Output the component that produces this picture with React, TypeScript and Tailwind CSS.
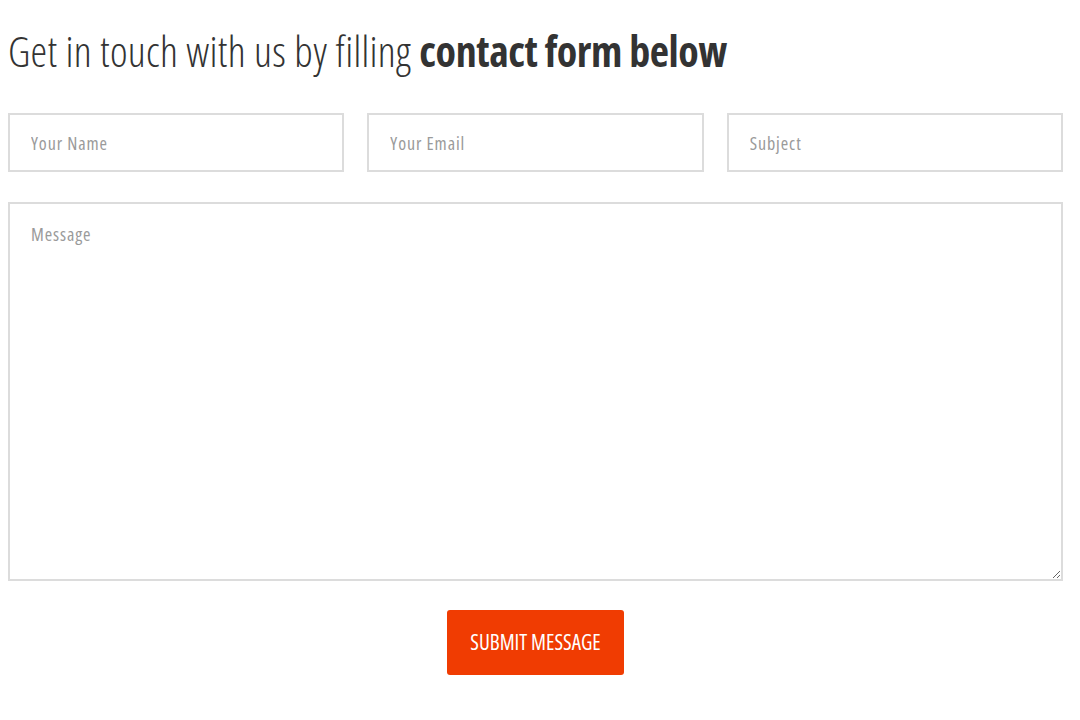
import { useState } from 'react';

export default function App() {
  const [form, setForm] = useState({ name: '', email: '', subject: '', message: '' });

  const field =
    "h-[59px] w-full border-2 border-[#dcdcdc] bg-white px-[21px] text-[18px] tracking-[0.9px] text-[#555] placeholder:text-[#9a9a9a] outline-none";

  return (
    <div className="min-h-screen bg-white font-['Open_Sans',sans-serif] font-stretch-[75%]">
      <div className="w-[1055px] ml-[8px] pt-[22px]">
        <h1 className="text-[42px] leading-[58px] text-[#333] font-light tracking-[0.3px]">
          Get in touch with us by filling <span className="font-bold tracking-[-0.4px]">contact form below</span>
        </h1>

        <form className="mt-[33px] flex flex-col" onSubmit={e => e.preventDefault()}>
          <div className="grid grid-cols-3 gap-[23px]">
            <input className={field} placeholder="Your Name" value={form.name} onChange={e => setForm({ ...form, name: e.target.value })} />
            <input className={field} placeholder="Your Email" value={form.email} onChange={e => setForm({ ...form, email: e.target.value })} />
            <input className={field} placeholder="Subject" value={form.subject} onChange={e => setForm({ ...form, subject: e.target.value })} />
          </div>

          <textarea
            className="mt-[30px] h-[379px] w-full border-2 border-[#dcdcdc] bg-white px-[21px] py-[17px] text-[18px] tracking-[0.9px] text-[#555] placeholder:text-[#9a9a9a] outline-none"
            placeholder="Message"
            value={form.message}
            onChange={e => setForm({ ...form, message: e.target.value })}
          />

          <div className="mt-[29px] flex justify-center">
            <button type="submit" className="h-[65px] w-[177px] rounded-[3px] bg-[#f03c02] text-[21px] text-white uppercase">
              Submit Message
            </button>
          </div>
        </form>
      </div>
    </div>
  );
}
